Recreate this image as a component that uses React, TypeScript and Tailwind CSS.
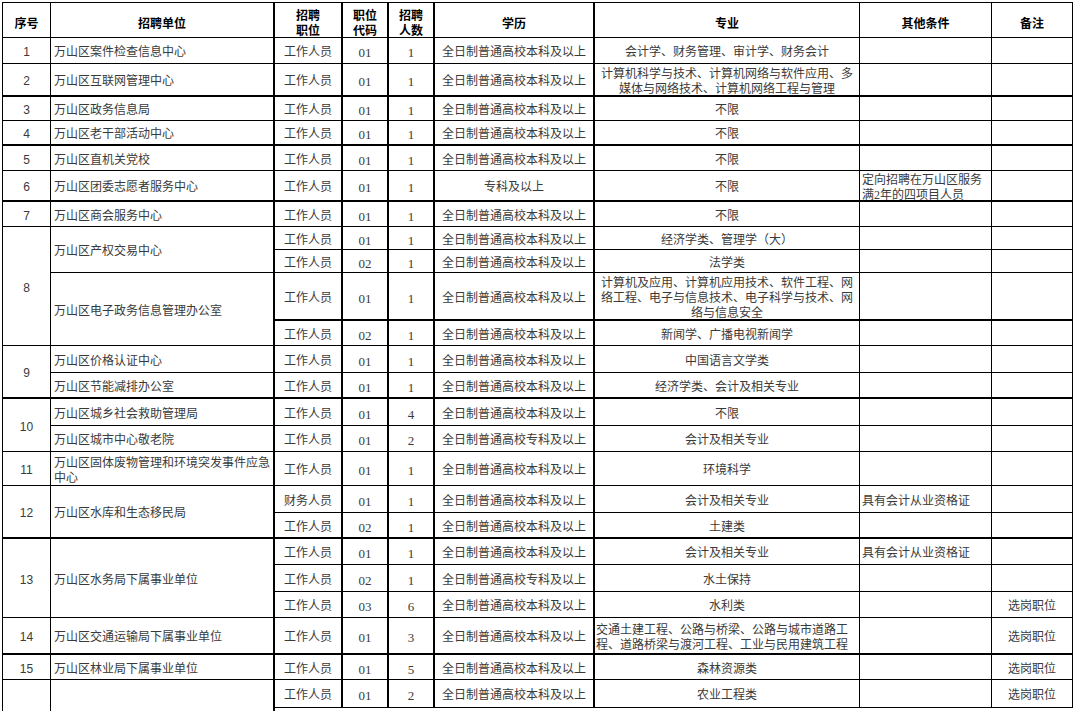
import React from "react";

const BASE =
  "flex items-center border-black text-[12px] leading-[15px] pt-[4px] whitespace-nowrap overflow-hidden";
const SERIF = "font-['Liberation_Serif','Noto_Sans_CJK_SC',serif] text-[#3a3a3a]";
const SANS = "font-['Liberation_Sans','Noto_Sans_CJK_SC',sans-serif] text-[#3a3a3a]";

type Edu = "b" | "z" | "zk";
const EDU: Record<Edu, string> = {
  b: "全日制普通高校本科及以上",
  z: "全日制普通高校专科及以上",
  zk: "专科及以上",
};

function Head({ children, first, thickR }: { children: React.ReactNode; first?: boolean; thickR?: boolean }) {
  return (
    <div
      className={
        BASE +
        " justify-center text-center border-t border-b font-bold text-black font-['Noto_Sans_CJK_SC','Liberation_Sans',sans-serif] " +
        (first ? "border-l " : "") +
        (thickR ? "border-r-2" : "border-r")
      }
    >
      {children}
    </div>
  );
}

function Seq({ n, span = "", thick }: { n?: string; span?: string; thick?: boolean }) {
  return (
    <div className={`${BASE} ${SANS} ${span} justify-center border-l border-r ${thick ? "border-b-2" : "border-b"}`}>
      {n}
    </div>
  );
}

function Unit({ children, span = "", thick }: { children?: React.ReactNode; span?: string; thick?: boolean }) {
  return (
    <div className={`${BASE} ${SERIF} ${span} pl-[3px] border-r-2 ${thick ? "border-b-2" : "border-b"}`}>
      <div>{children}</div>
    </div>
  );
}

type JobProps = {
  pos?: string;
  code: string;
  num: string;
  edu?: Edu;
  major: React.ReactNode;
  left?: boolean;
  other?: React.ReactNode;
  note?: string;
  thick?: boolean;
};

function Job({ pos = "工作人员", code, num, edu = "b", major, left, other, note, thick }: JobProps) {
  const b = thick ? "border-b-2" : "border-b";
  return (
    <>
      <div className={`${BASE} ${SERIF} justify-center border-r-2 ${b}`}>{pos}</div>
      <div className={`${BASE} ${SERIF} text-[13px] justify-center border-r-2 ${b}`}>{code}</div>
      <div className={`${BASE} ${SERIF} text-[13px] justify-center border-r-2 ${b}`}>{num}</div>
      <div className={`${BASE} ${SERIF} justify-center border-r-2 ${b}`}>{EDU[edu]}</div>
      <div
        className={`${BASE} ${SERIF} border-r ${b} ${left ? "justify-start pl-[1px] text-left" : "justify-center text-center"}`}
      >
        <div>{major}</div>
      </div>
      <div className={`${BASE} ${SERIF} justify-start pl-[2px] border-r ${b}`}>
        <div>{other}</div>
      </div>
      <div className={`${BASE} ${SERIF} justify-center border-r ${b}`}>{note}</div>
    </>
  );
}

export default function App() {
  return (
    <div className="h-[711px] w-[1075px] overflow-hidden bg-white pl-[2px] pt-[2px]">
      <div className="grid w-[1071px] grid-cols-[49px_224px_68px_46px_46px_160px_265px_132px_81px] grid-rows-[36px_26px_33px_24px_25px_25px_31px_25px_23px_23px_48px_25px_27px_26px_27px_26px_34px_27px_26px_26px_27px_26px_37px_25px_28px_40px]">
        {/* header */}
        <Head first>序号</Head>
        <Head thickR>招聘单位</Head>
        <Head thickR>
          招聘
          <br />
          职位
        </Head>
        <Head thickR>
          职位
          <br />
          代码
        </Head>
        <Head thickR>
          招聘
          <br />
          人数
        </Head>
        <Head thickR>学历</Head>
        <Head>专业</Head>
        <Head>其他条件</Head>
        <Head>备注</Head>

        {/* 1 */}
        <Seq n="1" />
        <Unit>万山区案件检查信息中心</Unit>
        <Job code="01" num="1" major="会计学、财务管理、审计学、财务会计" />

        {/* 2 */}
        <Seq n="2" thick />
        <Unit thick>万山区互联网管理中心</Unit>
        <Job
          code="01"
          num="1"
          thick
          major={
            <>
              计算机科学与技术、计算机网络与软件应用、多
              <br />
              媒体与网络技术、计算机网络工程与管理
            </>
          }
        />

        {/* 3 */}
        <Seq n="3" />
        <Unit>万山区政务信息局</Unit>
        <Job code="01" num="1" major="不限" />

        {/* 4 */}
        <Seq n="4" thick />
        <Unit thick>万山区老干部活动中心</Unit>
        <Job code="01" num="1" major="不限" thick />

        {/* 5 */}
        <Seq n="5" />
        <Unit>万山区直机关党校</Unit>
        <Job code="01" num="1" major="不限" />

        {/* 6 */}
        <Seq n="6" thick />
        <Unit thick>万山区团委志愿者服务中心</Unit>
        <Job
          code="01"
          num="1"
          edu="zk"
          major="不限"
          thick
          other={
            <>
              定向招聘在万山区服务
              <br />
              满2年的四项目人员
            </>
          }
        />

        {/* 7 */}
        <Seq n="7" />
        <Unit>万山区商会服务中心</Unit>
        <Job code="01" num="1" major="不限" />

        {/* 8 */}
        <Seq n="8" span="row-span-4" />
        <Unit span="row-span-2">万山区产权交易中心</Unit>
        <Job code="01" num="1" major="经济学类、管理学（大）" />
        <Job code="02" num="1" major="法学类" />
        <Unit span="row-span-2">万山区电子政务信息管理办公室</Unit>
        <Job
          code="01"
          num="1"
          thick
          major={
            <>
              计算机及应用、计算机应用技术、软件工程、网
              <br />
              络工程、电子与信息技术、电子科学与技术、网
              <br />
              络与信息安全
            </>
          }
        />
        <Job code="02" num="1" major="新闻学、广播电视新闻学" />

        {/* 9 */}
        <Seq n="9" span="row-span-2" thick />
        <Unit>万山区价格认证中心</Unit>
        <Job code="01" num="1" major="中国语言文学类" />
        <Unit thick>万山区节能减排办公室</Unit>
        <Job code="01" num="1" major="经济学类、会计及相关专业" thick />

        {/* 10 */}
        <Seq n="10" span="row-span-2" />
        <Unit>万山区城乡社会救助管理局</Unit>
        <Job code="01" num="4" major="不限" />
        <Unit>万山区城市中心敬老院</Unit>
        <Job code="01" num="2" edu="z" major="会计及相关专业" />

        {/* 11 */}
        <Seq n="11" />
        <Unit>
          万山区固体废物管理和环境突发事件应急
          <br />
          中心
        </Unit>
        <Job code="01" num="1" major="环境科学" />

        {/* 12 */}
        <Seq n="12" span="row-span-2" thick />
        <Unit span="row-span-2" thick>
          万山区水库和生态移民局
        </Unit>
        <Job pos="财务人员" code="01" num="1" major="会计及相关专业" other="具有会计从业资格证" />
        <Job code="02" num="1" major="土建类" thick />

        {/* 13 */}
        <Seq n="13" span="row-span-3" />
        <Unit span="row-span-3">万山区水务局下属事业单位</Unit>
        <Job code="01" num="1" major="会计及相关专业" other="具有会计从业资格证" />
        <Job code="02" num="1" edu="z" major="水土保持" />
        <Job code="03" num="6" major="水利类" note="选岗职位" />

        {/* 14 */}
        <Seq n="14" thick />
        <Unit thick>万山区交通运输局下属事业单位</Unit>
        <Job
          code="01"
          num="3"
          thick
          left
          note="选岗职位"
          major={
            <>
              交通土建工程、公路与桥梁、公路与城市道路工
              <br />
              程、道路桥梁与渡河工程、工业与民用建筑工程
            </>
          }
        />

        {/* 15 */}
        <Seq n="15" />
        <Unit>万山区林业局下属事业单位</Unit>
        <Job code="01" num="5" major="森林资源类" note="选岗职位" />

        {/* 16 */}
        <Seq span="row-span-2" />
        <Unit span="row-span-2" />
        <Job code="01" num="2" major="农业工程类" note="选岗职位" />
      </div>
    </div>
  );
}
